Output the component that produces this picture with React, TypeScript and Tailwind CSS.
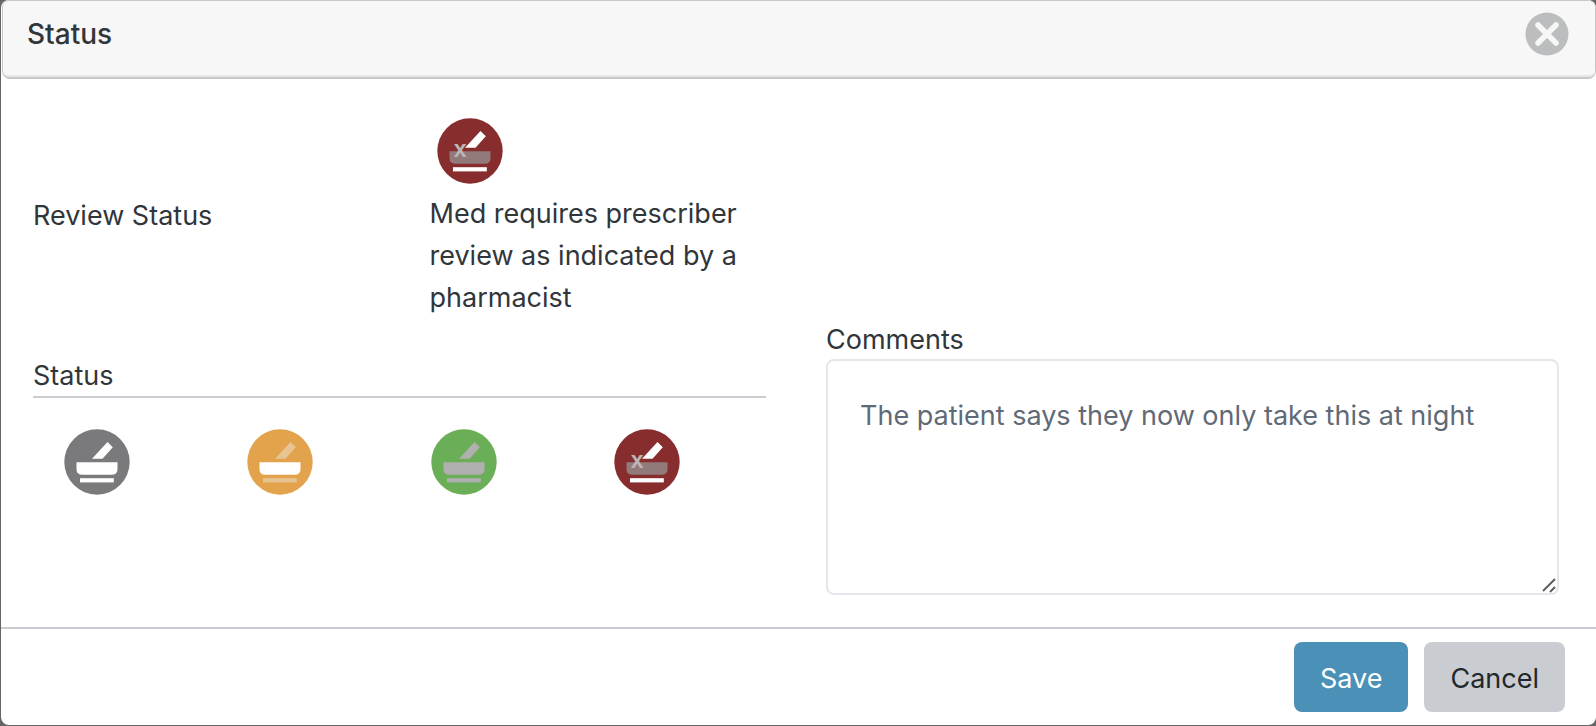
import React, { useState } from 'react'

type Tone = {
  label: string
  circle: string
  pestle: string
  bowl: string
  base: string
  crossed?: boolean
}

const unreviewed: Tone = { label: 'Not reviewed', circle: '#7a797b', pestle: '#ffffff', bowl: '#ffffff', base: '#ffffff' }
const inReview: Tone = { label: 'Review in progress', circle: '#e2a34c', pestle: '#e7c492', bowl: '#ffffff', base: '#e7c492' }
const approved: Tone = { label: 'Reviewed', circle: '#6aae57', pestle: '#b0b0b0', bowl: '#b0b0b0', base: '#b0b0b0' }
const prescriber: Tone = { label: 'Requires prescriber review', circle: '#882d2d', pestle: '#ffffff', bowl: '#927a7a', base: '#ffffff', crossed: true }

const statuses = [unreviewed, inReview, approved, prescriber]

// Mortar and pestle on a coloured disc
const MortarIcon = ({ tone }: { tone: Tone }) => (
  <svg viewBox="0 0 66 66" className="size-[66px]" aria-hidden="true">
    <circle cx="33" cy="33" r="32.7" fill={tone.circle} />
    <path d="M43.5 13 L48.8 18.2 L38.5 29.8 H28 Z" fill={tone.pestle} />
    <path d="M12.5 33.3 H53.5 V40 Q53.5 45.8 47.5 45.8 H18.5 Q12.5 45.8 12.5 40 Z" fill={tone.bowl} />
    <rect x="16" y="49.2" width="33.8" height="4.2" fill={tone.base} />
    {tone.crossed && (
      <text x="23.2" y="39" textAnchor="middle" fill="#bcb5b5" className="font-['Liberation_Sans',sans-serif] text-[23px] font-bold">
        x
      </text>
    )}
  </svg>
)

export default function App() {
  const [current, setCurrent] = useState(prescriber)
  const [comments, setComments] = useState('The patient says they now only take this at night')

  return (
    <div className="bg-[#666666] pb-px pl-px font-[Inter,sans-serif] text-[27px] leading-[42px] text-[#30363a]">
      <div role="dialog" aria-labelledby="title" className="overflow-hidden rounded-lg bg-white">
        {/* Header */}
        <header className="ml-px rounded-lg border border-b-2 border-[#c8c8c8]">
          <div className="flex items-start justify-between rounded-md border-b-2 border-[#e8e8e8] bg-[#f7f7f7] pt-[11px] pr-[26px] pb-[19px] pl-6">
            <h1 id="title" className="text-[28px] leading-[44px] font-medium">Status</h1>
            <button type="button" aria-label="Close">
              <svg viewBox="0 0 44 44" className="size-[44px]">
                <circle cx="22" cy="22" r="21.5" fill="#bbbdbe" />
                <path d="M13 13 L31 31 M31 13 L13 31" stroke="#f7f7f7" strokeWidth="5.5" strokeLinecap="round" />
              </svg>
            </button>
          </div>
        </header>

        {/* Body */}
        <main className="grid grid-cols-2 items-end gap-x-[60px] pr-[37px] pb-8 pl-8">
          <div className="grid grid-cols-2 items-center gap-x-[60px] pt-[34px]">
            <h2>Review Status</h2>
            <div className="pt-[5px]">
              <div className="mb-[9px] pl-[7px]">
                <MortarIcon tone={current} />
              </div>
              <p>Med requires prescriber review as indicated by a pharmacist</p>
            </div>
          </div>

          <fieldset className="col-start-1 mt-[37px] self-start">
            <legend className="w-full border-b-2 border-[#c9cdd2] leading-[40px]">Status</legend>
            <div className="grid grid-cols-4 pt-[31px]">
              {statuses.map((tone) => (
                <div key={tone.label} className="pl-[31px]">
                  <button type="button" aria-label={tone.label} onClick={() => setCurrent(tone)} className="block rounded-full">
                    <MortarIcon tone={tone} />
                  </button>
                </div>
              ))}
            </div>
          </fieldset>

          <div className="col-start-2">
            <label htmlFor="comments" className="block pt-0.5 leading-[38px]">Comments</label>
            <div className="relative">
              <textarea
                id="comments"
                value={comments}
                onChange={(e) => setComments(e.target.value)}
                className="block h-[236px] w-full resize-y rounded-lg border-2 border-[#e5e5eb] px-8 py-[34px] text-[#606a76]"
              />
              {/* Larger resize grip over the native one */}
              <svg viewBox="0 0 16 16" className="pointer-events-none absolute right-[3px] bottom-[2px] size-4 rounded-br bg-white" aria-hidden="true">
                <path d="M3 14 L15 2 M10 15 L15 10" stroke="#5f5f5f" strokeWidth="2" />
              </svg>
            </div>
          </div>
        </main>

        {/* Footer */}
        <footer className="flex justify-end gap-4 border-t-2 border-[#c9cdd2] py-[13px] pr-[31px]">
          <button type="button" className="rounded-lg bg-[#4b91b7] px-[26px] pt-4 pb-3 text-white">Save</button>
          <button type="button" className="rounded-lg bg-[#c9cdd2] px-[26px] pt-4 pb-3 text-[#22272c]">Cancel</button>
        </footer>
      </div>
    </div>
  )
}
